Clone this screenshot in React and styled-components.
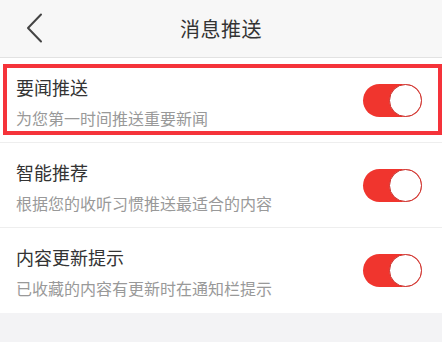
import React, { useState } from "react";
import styled, { createGlobalStyle } from "styled-components";

const GlobalStyle = createGlobalStyle`
  html, body {
    margin: 0;
    padding: 0;
    background: #f3f3f5;
    font-family: "Noto Sans CJK SC", "Noto Sans", sans-serif;
  }
`;

const settings = [
  { id: "news", title: "要闻推送", desc: "为您第一时间推送重要新闻", highlighted: true },
  { id: "smart", title: "智能推荐", desc: "根据您的收听习惯推送最适合的内容" },
  { id: "update", title: "内容更新提示", desc: "已收藏的内容有更新时在通知栏提示" },
];

const App = () => {
  const [state, setState] = useState({ news: true, smart: true, update: true });
  const toggle = (id) => setState((s) => ({ ...s, [id]: !s[id] }));

  return (
    <Page>
      <GlobalStyle />
      <Header>
        <BackButton aria-label="返回">
          <svg width="18" height="30" viewBox="0 0 18 30">
            <polyline
              points="15,1.5 2,15 15,28.5"
              fill="none"
              stroke="#444"
              strokeWidth="2"
              strokeLinecap="round"
              strokeLinejoin="round"
            />
          </svg>
        </BackButton>
        <Title>消息推送</Title>
      </Header>
      <List>
        {settings.map((item) => (
          <Row key={item.id} $highlighted={item.highlighted}>
            <TextBlock>
              <ItemTitle>{item.title}</ItemTitle>
              <ItemDesc>{item.desc}</ItemDesc>
            </TextBlock>
            <Switch $on={state[item.id]} onClick={() => toggle(item.id)}>
              <Knob $on={state[item.id]} />
            </Switch>
          </Row>
        ))}
      </List>
    </Page>
  );
};

const Page = styled.div`
  width: 442px;
  min-height: 342px;
  background: #f3f3f5;
`;

const Header = styled.div`
  position: relative;
  height: 57px;
  display: flex;
  align-items: center;
  justify-content: center;
  background: #f7f7f7;
  border-bottom: 1px solid #e2e2e2;
`;

const BackButton = styled.button`
  position: absolute;
  left: 26px;
  top: 13px;
  padding: 0;
  border: none;
  background: none;
  cursor: pointer;
  display: flex;
`;

const Title = styled.h1`
  margin: 0;
  font-size: 20px;
  font-weight: 400;
  color: #333;
  letter-spacing: 0.5px;
`;

const List = styled.div`
  background: #fff;
`;

const Row = styled.div`
  position: relative;
  height: 85px;
  box-sizing: border-box;
  display: flex;
  align-items: center;
  justify-content: space-between;
  padding: 0 20px 0 16px;
  border-bottom: 1px solid #eeeeee;

  &:last-child {
    border-bottom: none;
  }

  &::after {
    content: "";
    display: ${(p) => (p.$highlighted ? "block" : "none")};
    position: absolute;
    left: 3px;
    right: 0;
    top: 6px;
    bottom: 7px;
    border: 4px solid #f5333a;
    pointer-events: none;
  }
`;

const TextBlock = styled.div`
  display: flex;
  flex-direction: column;
  gap: 8px;
  padding-top: 3px;
`;

const ItemTitle = styled.div`
  font-size: 18px;
  line-height: 24px;
  color: #333;
`;

const ItemDesc = styled.div`
  font-size: 16px;
  line-height: 22px;
  color: #999;
`;

const Switch = styled.button`
  width: 59px;
  height: 33px;
  padding: 0;
  border: none;
  border-radius: 17px;
  background: ${(p) => (p.$on ? "#f0352e" : "#e5e5e5")};
  display: flex;
  justify-content: ${(p) => (p.$on ? "flex-end" : "flex-start")};
  align-items: center;
  cursor: pointer;
`;

const Knob = styled.span`
  width: 33px;
  height: 33px;
  box-sizing: border-box;
  border-radius: 50%;
  background: #fff;
  border: 1.5px solid ${(p) => (p.$on ? "#c9342f" : "#ccc")};
`;

export default App;
